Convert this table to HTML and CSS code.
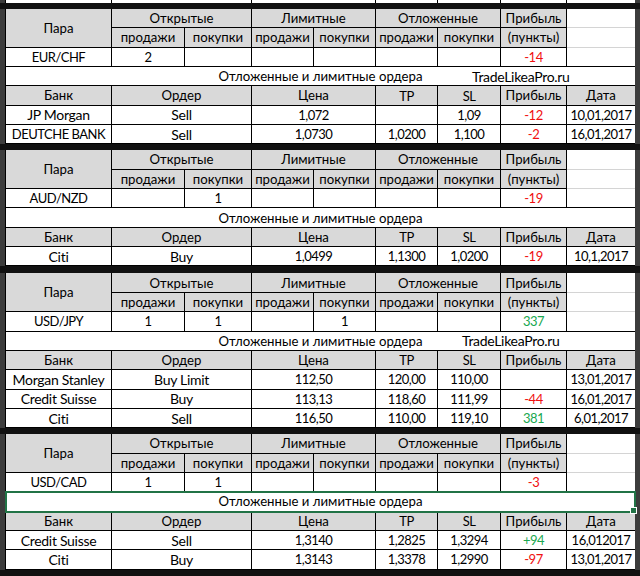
FILE: index.html
```html
<!DOCTYPE html>
<html lang="ru">
<head>
<meta charset="utf-8">
<title>Отложенные и лимитные ордера</title>
<link rel="stylesheet" href="styles.css">
</head>
<body>
<div class="sheet">
  <div class="blk partial">
    <div class="c"></div><div class="c s2"></div><div class="c s2"></div><div class="c"></div><div class="c"></div><div class="c"></div><div class="c last"></div>
  </div>
  <div class="sep"></div>

  <section class="blk">
    <div class="c h r2">Пара</div><div class="c h s2">Открытые</div><div class="c h s2">Лимитные</div><div class="c h s2">Отложенные</div><div class="c h">Прибыль</div><div class="c last grid"></div>
    <div class="c h">продажи</div><div class="c h">покупки</div><div class="c h">продажи</div><div class="c h">покупки</div><div class="c h">продажи</div><div class="c h">покупки</div><div class="c h">(пункты)</div><div class="c last grid"></div>
    <div class="c n">EUR/CHF</div><div class="c n">2</div><div class="c"></div><div class="c"></div><div class="c"></div><div class="c"></div><div class="c"></div><div class="c n neg">-14</div><div class="c last"></div>
    <div class="c title">Отложенные и лимитные ордера<span class="mark l m1">TradeLikeaPro.ru</span></div>
    <div class="c h">Банк</div><div class="c h s2">Ордер</div><div class="c h s2">Цена</div><div class="c h n">TP</div><div class="c h n">SL</div><div class="c h">Прибыль</div><div class="c h last">Дата</div>
    <div class="c l">JP Morgan</div><div class="c l s2">Sell</div><div class="c n s2">1,072</div><div class="c"></div><div class="c n">1,09</div><div class="c n neg">-12</div><div class="c n last">10,01,2017</div>
    <div class="c n">DEUTCHE BANK</div><div class="c l s2">Sell</div><div class="c n s2">1,0730</div><div class="c n">1,0200</div><div class="c n">1,100</div><div class="c n neg">-2</div><div class="c n last">16,01,2017</div>
  </section>
  <div class="sep"></div>

  <section class="blk">
    <div class="c h r2">Пара</div><div class="c h s2">Открытые</div><div class="c h s2">Лимитные</div><div class="c h s2">Отложенные</div><div class="c h">Прибыль</div><div class="c last grid"></div>
    <div class="c h">продажи</div><div class="c h">покупки</div><div class="c h">продажи</div><div class="c h">покупки</div><div class="c h">продажи</div><div class="c h">покупки</div><div class="c h">(пункты)</div><div class="c last grid"></div>
    <div class="c n">AUD/NZD</div><div class="c"></div><div class="c n">1</div><div class="c"></div><div class="c"></div><div class="c"></div><div class="c"></div><div class="c n neg">-19</div><div class="c last"></div>
    <div class="c title">Отложенные и лимитные ордера</div>
    <div class="c h">Банк</div><div class="c h s2">Ордер</div><div class="c h s2">Цена</div><div class="c h n">TP</div><div class="c h n">SL</div><div class="c h">Прибыль</div><div class="c h last">Дата</div>
    <div class="c l">Citi</div><div class="c l s2">Buy</div><div class="c n s2">1,0499</div><div class="c n">1,1300</div><div class="c n">1,0200</div><div class="c n neg">-19</div><div class="c n last">10,1,2017</div>
  </section>
  <div class="sep thick"></div>

  <section class="blk">
    <div class="c h r2">Пара</div><div class="c h s2">Открытые</div><div class="c h s2">Лимитные</div><div class="c h s2">Отложенные</div><div class="c h">Прибыль</div><div class="c last grid"></div>
    <div class="c h">продажи</div><div class="c h">покупки</div><div class="c h">продажи</div><div class="c h">покупки</div><div class="c h">продажи</div><div class="c h">покупки</div><div class="c h">(пункты)</div><div class="c last grid"></div>
    <div class="c n">USD/JPY</div><div class="c n">1</div><div class="c n">1</div><div class="c"></div><div class="c n">1</div><div class="c"></div><div class="c"></div><div class="c n pos">337</div><div class="c last"></div>
    <div class="c title">Отложенные и лимитные ордера<span class="mark l m3">TradeLikeaPro.ru</span></div>
    <div class="c h">Банк</div><div class="c h s2">Ордер</div><div class="c h s2">Цена</div><div class="c h n">TP</div><div class="c h n">SL</div><div class="c h">Прибыль</div><div class="c h last">Дата</div>
    <div class="c l">Morgan Stanley</div><div class="c l s2">Buy Limit</div><div class="c n s2">112,50</div><div class="c n">120,00</div><div class="c n">110,00</div><div class="c"></div><div class="c n last">13,01,2017</div>
    <div class="c l">Credit Suisse</div><div class="c l s2">Buy</div><div class="c n s2">113,13</div><div class="c n">118,60</div><div class="c n">111,99</div><div class="c n neg">-44</div><div class="c n last">16,01,2017</div>
    <div class="c l">Citi</div><div class="c l s2">Sell</div><div class="c n s2">116,50</div><div class="c n">110,00</div><div class="c n">119,10</div><div class="c n pos">381</div><div class="c n last">6,01,2017</div>
  </section>
  <div class="sep"></div>

  <section class="blk">
    <div class="c h r2">Пара</div><div class="c h s2">Открытые</div><div class="c h s2">Лимитные</div><div class="c h s2">Отложенные</div><div class="c h">Прибыль</div><div class="c last grid"></div>
    <div class="c h">продажи</div><div class="c h">покупки</div><div class="c h">продажи</div><div class="c h">покупки</div><div class="c h">продажи</div><div class="c h">покупки</div><div class="c h">(пункты)</div><div class="c last grid"></div>
    <div class="c n">USD/CAD</div><div class="c n">1</div><div class="c n">1</div><div class="c"></div><div class="c"></div><div class="c"></div><div class="c"></div><div class="c n neg">-3</div><div class="c last"></div>
    <div class="c title selected">Отложенные и лимитные ордера</div>
    <div class="c h">Банк</div><div class="c h s2">Ордер</div><div class="c h s2">Цена</div><div class="c h n">TP</div><div class="c h n">SL</div><div class="c h">Прибыль</div><div class="c h last">Дата</div>
    <div class="c l">Credit Suisse</div><div class="c l s2">Sell</div><div class="c n s2">1,3140</div><div class="c n">1,2825</div><div class="c n">1,3294</div><div class="c n pos">+94</div><div class="c n last">16,012017</div>
    <div class="c l">Citi</div><div class="c l s2">Buy</div><div class="c n s2">1,3143</div><div class="c n">1,3378</div><div class="c n">1,2990</div><div class="c n neg">-97</div><div class="c n last">13,01,2017</div>
  </section>
  <div class="sep"></div>
</div>
</body>
</html>
```

FILE: styles.css
```css
html, body {
  margin: 0;
  padding: 0;
}
body {
  background: #3c3c3c;
  width: 640px;
  height: 576px;
  overflow: hidden;
  font-family: "Lato", "Open Sans", "Noto Sans", sans-serif;
  font-size: 13.2px;
  color: #000;
}
.sheet {
  display: flex;
  flex-direction: column;
}
.sep {
  height: 6px;
  background: #111;
}
.sep.thick {
  height: 7px;
}
.blk {
  display: grid;
  grid-template-columns: 106px 73px 67px 62px 62px 62px 63px 66px 68px;
  grid-auto-rows: 19.35px;
  margin: 0 5px;
  background: #fff;
  border-left: 1px solid #000;
}
.blk.partial {
  grid-auto-rows: 3px;
}
.blk.partial .c {
  border-bottom: none;
}
.c {
  box-sizing: border-box;
  border-right: 1px solid #000;
  border-bottom: 1px solid #000;
  display: flex;
  align-items: center;
  justify-content: center;
  white-space: nowrap;
  line-height: 1;
  padding-top: 1px;
}
.n {
  font-size: 13px;
  letter-spacing: -0.5px;
}
.l {
  font-size: 14px;
  letter-spacing: -0.3px;
}
.h {
  background: #d9d9d9;
}
.s2 {
  grid-column: span 2;
}
.r2 {
  grid-row: span 2;
}
.last {
  border-right: none;
}
.grid {
  border-bottom-color: #d4d4d4;
}
.title {
  grid-column: 1 / -1;
  border-right: none;
  position: relative;
}
.mark {
  position: absolute;
  top: 0;
  bottom: 0;
  display: flex;
  align-items: center;
  padding-top: 1px;
}
.m1 {
  left: 466px;
}
.m3 {
  left: 456px;
}
.neg {
  color: #f01010;
}
.pos {
  color: #1aa850;
}
.selected {
  outline: 2px solid #217346;
  outline-offset: -1px;
  z-index: 1;
}
.selected::after {
  content: "";
  position: absolute;
  right: -2px;
  bottom: -3px;
  width: 5px;
  height: 5px;
  background: #217346;
  border: 1px solid #fff;
}
```
